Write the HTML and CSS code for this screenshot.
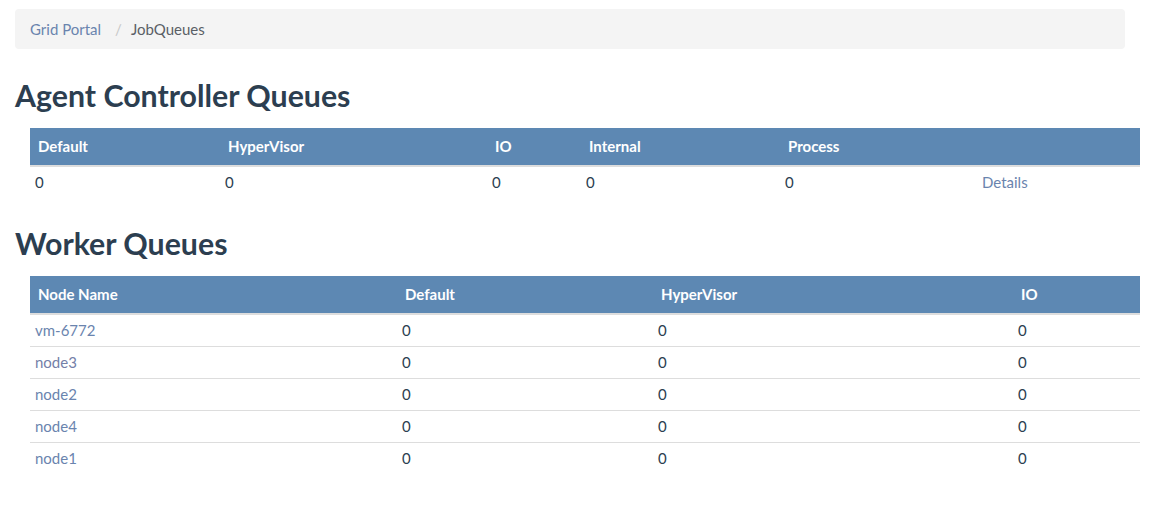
FILE: index.html
```html
<!DOCTYPE html>
<html>
<head>
<meta charset="utf-8">
<link rel="stylesheet" href="styles.css">
</head>
<body>
<div class="page">
  <ol class="breadcrumb">
    <li><a href="#">Grid Portal</a></li>
    <li class="active">JobQueues</li>
  </ol>

  <h2 class="title first">Agent Controller Queues</h2>
  <table class="grid agent">
    <colgroup>
      <col class="a1"><col class="a2"><col class="a3"><col class="a4"><col class="a5"><col class="a6">
    </colgroup>
    <thead>
      <tr><th>Default</th><th>HyperVisor</th><th>IO</th><th>Internal</th><th>Process</th><th></th></tr>
    </thead>
    <tbody>
      <tr><td>0</td><td>0</td><td>0</td><td>0</td><td>0</td><td><a href="#">Details</a></td></tr>
    </tbody>
  </table>

  <h2 class="title second">Worker Queues</h2>
  <table class="grid worker">
    <colgroup>
      <col class="w1"><col class="w2"><col class="w3"><col class="w4">
    </colgroup>
    <thead>
      <tr><th>Node Name</th><th>Default</th><th>HyperVisor</th><th>IO</th></tr>
    </thead>
    <tbody>
      <tr><td><a href="#">vm-6772</a></td><td>0</td><td>0</td><td>0</td></tr>
      <tr><td><a href="#" class="visited">node3</a></td><td>0</td><td>0</td><td>0</td></tr>
      <tr><td><a href="#">node2</a></td><td>0</td><td>0</td><td>0</td></tr>
      <tr><td><a href="#">node4</a></td><td>0</td><td>0</td><td>0</td></tr>
      <tr><td><a href="#">node1</a></td><td>0</td><td>0</td><td>0</td></tr>
    </tbody>
  </table>
</div>
</body>
</html>
```

FILE: styles.css
```css
html, body {
  margin: 0;
  padding: 0;
  background: #ffffff;
}
body {
  font-family: Lato, "Open Sans", "Liberation Sans", sans-serif;
  font-size: 15px;
  line-height: 1.42857;
  color: #2c3e50;
}
a {
  color: #6a84ae;
  text-decoration: none;
}
a.visited {
  color: #7480a8;
}
.page {
  padding: 9px 15px 0 15px;
}
.breadcrumb {
  list-style: none;
  margin: 0;
  padding: 2px 15px 0 15px;
  width: 1110px;
  box-sizing: border-box;
  background: #f4f4f4;
  border-radius: 4px;
  display: flex;
  height: 40px;
  align-items: center;
}
.breadcrumb li.active {
  color: #5a5f66;
}
.breadcrumb li + li::before {
  content: "/";
  color: #c8c8c8;
  padding: 0 9px 0 14px;
}
.title {
  font-size: 30.3px;
  font-weight: 700;
  line-height: 33px;
  margin: 0 0 17px 0;
  color: #2c3e50;
}
.title.first {
  margin-top: 30px;
  margin-bottom: 16px;
}
.title.second {
  margin-top: 28px;
  margin-bottom: 16px;
}
.grid {
  margin-left: 15px;
  width: 1110px;
  border-collapse: collapse;
  table-layout: fixed;
}
.grid th {
  background: #5d88b3;
  color: #ffffff;
  font-weight: 700;
  text-align: left;
  padding: 0 8px;
  height: 38px;
  border-bottom: 2px solid #dddddd;
  box-sizing: border-box;
}
.grid td {
  padding: 0 5px;
  height: 31px;
  text-align: left;
}
.worker tbody tr + tr td {
  border-top: 1px solid #dddddd;
}
.agent tbody td {
  height: 32px;
}
.a1 { width: 190px; }
.a2 { width: 267px; }
.a3 { width: 94px; }
.a4 { width: 199px; }
.a5 { width: 197px; }
.a6 { width: 163px; }
.w1 { width: 367px; }
.w2 { width: 256px; }
.w3 { width: 360px; }
.w4 { width: 127px; }
```
